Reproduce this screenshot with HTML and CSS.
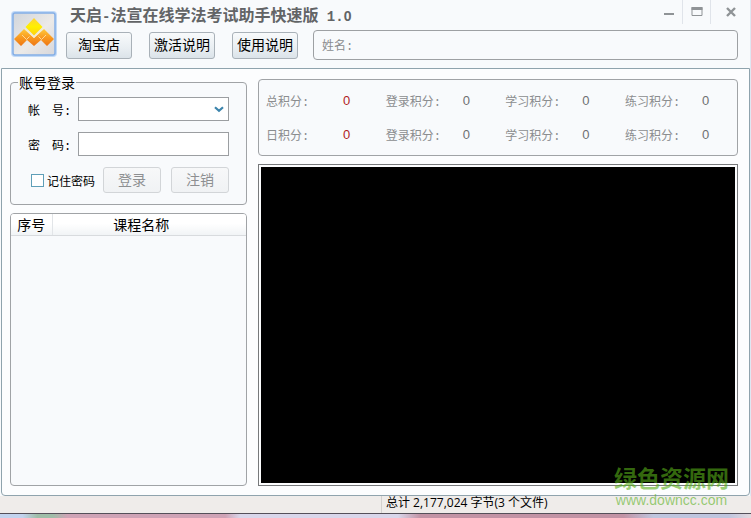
FILE: index.html
```html
<!DOCTYPE html>
<html lang="zh-CN">
<head>
<meta charset="utf-8">
<title>天启-法宣在线学法考试助手快速版 1.0</title>
<link rel="stylesheet" href="styles.css">
</head>
<body>
<div class="window">
  <header class="header">
    <div class="logo">
      <svg viewBox="0 0 46 46" width="46" height="46" aria-hidden="true">
        <defs>
          <linearGradient id="tile" x1="0" y1="0" x2="1" y2="1"><stop offset="0" stop-color="#cfd4db"/><stop offset=".55" stop-color="#eceae8"/><stop offset="1" stop-color="#d6d6da"/></linearGradient>
          <linearGradient id="gold" x1="0" y1="0" x2="0" y2="1"><stop offset="0" stop-color="#ffd23a"/><stop offset=".5" stop-color="#fff000"/><stop offset="1" stop-color="#ffd010"/></linearGradient>
          <linearGradient id="amber" x1="0" y1="0" x2="0" y2="1"><stop offset="0" stop-color="#ffc93a"/><stop offset=".5" stop-color="#f99a20"/><stop offset="1" stop-color="#ee7614"/></linearGradient>
        </defs>
        <rect x="1" y="1" width="44" height="44" rx="3" fill="url(#tile)" stroke="#c2daf7" stroke-width="2"/>
        <rect x="2" y="2" width="42" height="42" rx="2" fill="none" stroke="#84aee6" stroke-width="1.5"/>
        <path d="M3 28L13 18l10 9 10-9 10 10-7 7-6-6-7 6-7-6-6 6z" fill="url(#amber)"/>
        <path d="M11 24l4.500 4.500 3-3M35 24l-4.500 4.500-3-3" fill="none" stroke="#ffe6b0" stroke-width=".8"/>
        <path d="M14 17.500l9 8.500 9-8.500" fill="none" stroke="#f6eccb" stroke-width="1.300"/>
        <path d="M23 7l8.500 9-8.500 8.500-8.500-8.500z" fill="url(#gold)"/>
      </svg>
    </div>
    <div class="header-body">
      <div class="titlebar">
        <h1 class="title">天启<span class="mono">-</span>法宣在线学法考试助手快速版<span class="mono"> 1.</span><span class="digit">0</span></h1>
        <div class="controls">
          <button class="control" type="button" aria-label="最小化"><svg width="12" height="12" viewBox="0 0 12 12"><path d="M1 8h10" stroke="#8f9396" stroke-width="2"/></svg></button>
          <button class="control" type="button" aria-label="最大化"><svg width="12" height="12" viewBox="0 0 12 12"><path d="M1 1.500h10v8H1z" fill="none" stroke="#8f9396"/><path d="M.5 2.500h11" stroke="#8f9396" stroke-width="3"/></svg></button>
          <button class="control control-close" type="button" aria-label="关闭"><svg width="12" height="12" viewBox="0 0 12 12"><path d="M2 2l8 8M10 2l-8 8" stroke="#8f9396" stroke-width="2.400"/></svg></button>
        </div>
      </div>
      <div class="toolbar">
        <button class="button" type="button">淘宝店</button>
        <button class="button" type="button">激活说明</button>
        <button class="button" type="button">使用说明</button>
        <div class="name-box">姓名:</div>
      </div>
    </div>
  </header>
  <main class="main">
    <div class="side">
      <form>
        <fieldset class="login">
          <legend>账号登录</legend>
          <div class="field">
            <label for="account">帐　号:</label>
            <div class="select-wrap">
              <select id="account" class="input"><option></option></select>
              <svg class="chevron" width="10" height="7" viewBox="0 0 10 7" aria-hidden="true"><path d="M1 1.200l4 3.600 4-3.600" fill="none" stroke="#3c84ac" stroke-width="2.200"/></svg>
            </div>
          </div>
          <div class="field">
            <label for="password">密　码:</label>
            <input id="password" class="input" type="password">
          </div>
          <div class="actions">
            <input id="remember" class="check" type="checkbox">
            <label for="remember">记住密码</label>
            <button class="button action" type="button" disabled>登录</button>
            <button class="button action" type="button" disabled>注销</button>
          </div>
        </fieldset>
      </form>
      <div class="courses">
        <table>
          <thead><tr><th class="index">序号</th><th>课程名称</th></tr></thead>
        </table>
      </div>
    </div>
    <div class="content">
      <div class="scores">
        <div class="score"><span>总积分:</span><b class="red">0</b></div>
        <div class="score"><span>登录积分:</span><b>0</b></div>
        <div class="score"><span>学习积分:</span><b>0</b></div>
        <div class="score"><span>练习积分:</span><b>0</b></div>
        <div class="score"><span>日积分:</span><b class="red">0</b></div>
        <div class="score"><span>登录积分:</span><b>0</b></div>
        <div class="score"><span>学习积分:</span><b>0</b></div>
        <div class="score"><span>练习积分:</span><b>0</b></div>
      </div>
      <div class="video"></div>
    </div>
  </main>
</div>
<footer class="status"><span class="status-pane"></span><span class="status-text">总计 2,177,024 字节(3 个文件)</span></footer>
<div class="desktop"></div>
<div class="watermark"><strong>绿色资源网</strong><span>www.downcc.com</span></div>
</body>
</html>
```
FILE: styles.css
```css
* { box-sizing: border-box; }
body {
  margin: 0;
  min-height: 100vh;
  display: flex;
  flex-direction: column;
  position: relative;
  background: #dfe7f2;
  color: #000;
  font: 12px/16px "Liberation Mono", "Noto Sans CJK SC", sans-serif;
}
button, input, select { font: inherit; margin: 0; }

.window {
  flex: 1;
  display: flex;
  flex-direction: column;
  margin-right: 1px;
  background: #f8fafc;
}
.header { display: flex; padding: 0 0 8px 11px; }
.logo { margin: 11px 9px 0 0; height: 46px; }
.header-body { flex: 1; }
.titlebar { display: flex; justify-content: space-between; height: 30px; }
.title {
  margin: 0;
  padding: 3px 0 0 4px;
  font-size: 16px;
  line-height: 22px;
  font-weight: 700;
  font-family: "Noto Sans CJK SC", sans-serif;
  color: #626466;
  white-space: pre;
}
.mono { font-family: "Liberation Mono", monospace; font-size: 14px; }
.digit { font-family: "Liberation Sans", sans-serif; font-size: 14px; }
.controls { display: flex; height: 24px; }
.control {
  width: 28px;
  padding: 0;
  border: 0;
  border-right: 1px solid #e0e4ea;
  background: none;
  display: flex;
  align-items: center;
  justify-content: center;
}
.control-close { width: 39px; border-right: 0; }
.toolbar { display: flex; align-items: center; gap: 17px; margin-right: 12px; }
.button {
  width: 66px;
  height: 27px;
  padding: 0 0 2px;
  border: 1px solid #a9b1b8;
  border-radius: 3px;
  background: linear-gradient(#f8fafb, #e9eef2 60%, #dbe3e9);
  color: #000;
  font: 14px/20px "Noto Sans CJK SC", sans-serif;
}
.button:disabled { color: #8d8f91; border-color: #d2d5d8; background: linear-gradient(#f7f8f9, #f0f2f4); }
.name-box {
  flex: 1;
  height: 30px;
  margin-left: -2px;
  padding: 2px 8px 0;
  border: 1px solid #9da0a3;
  border-radius: 4px;
  line-height: 28px;
  color: #8a8c8e;
}

.main {
  flex: 1;
  display: flex;
  gap: 11px;
  margin-left: 1px;
  padding: 3px 11px 9px 8px;
  border: 1px solid #8fa3ad;
  border-radius: 0 0 4px 4px;
  background: #fcfdfe;
}
.side { flex: 0 0 237px; display: flex; flex-direction: column; gap: 8px; }
.login {
  margin: 0;
  min-width: 0;
  padding: 5px 17px 11px;
  border: 1px solid #a0a3a6;
  border-radius: 4px;
  background: #f8fafc;
}
.login legend { margin-left: -10px; padding: 0 1px; font: 14px/20px "Noto Sans CJK SC", sans-serif; }
.field { display: flex; align-items: center; margin-bottom: 11px; }
.field label { flex: 0 0 50px; padding-top: 5px; }
.input {
  flex: 1;
  width: 100%;
  min-width: 0;
  height: 24px;
  padding: 0 4px;
  border: 1px solid #9b9ea1;
  border-radius: 0;
  background: #fff;
  appearance: none;
}
.select-wrap { flex: 1; display: flex; position: relative; }
.chevron { position: absolute; right: 5px; top: 9px; pointer-events: none; }
.actions { display: flex; align-items: center; margin-left: 3px; }
.actions label { margin: 0 auto 0 3px; padding-top: 5px; white-space: nowrap; }
.check {
  appearance: none;
  width: 13px;
  height: 13px;
  border: 1px solid #5f9fb8;
  background: #fff;
}
.action { width: 58px; height: 26px; }
.action + .action { margin-left: 10px; }
.courses {
  flex: 1;
  border: 1px solid #a0a3a6;
  border-radius: 4px;
  background: #f8fafc;
  overflow: hidden;
}
.courses table { width: 100%; border-collapse: collapse; background: linear-gradient(#fff 45%, #f1f4f6); }
.courses th {
  height: 21px;
  padding: 0;
  border-bottom: 1px solid #d8dbde;
  font: 14px/20px "Noto Sans CJK SC", sans-serif;
}
.courses th + th { padding-right: 16px; }
.courses .index { width: 41px; border-right: 1px solid #e2e5e8; }

.content { flex: 1; display: flex; flex-direction: column; gap: 8px; padding-top: 7px; }
.scores {
  display: grid;
  grid-template-columns: repeat(3, 1fr) 112px;
  grid-auto-rows: 34px;
  padding: 4px 0 3px 7px;
  border: 1px solid #a0a3a6;
  border-radius: 4px;
  background: #f8fafc;
  color: #8b8d8f;
}
.score { display: grid; grid-template-columns: 77px 1fr; align-items: center; }
.score span { padding-top: 3px; }
.score b { font: 13px/16px "Liberation Sans", sans-serif; color: #6e7072; }
.score .red { color: #b01c24; }
.video { flex: 1; border: 1px solid #77797b; padding: 2px; background: #000 content-box; }

.status {
  display: flex;
  height: 18px;
  border-bottom: 1px solid #55505a;
  background: #efecea;
  font: 12px/14px "Open Sans", "Noto Sans CJK SC", sans-serif;
}
.status-pane { flex: 0 0 382px; border-right: 1px solid #d3d1cf; }
.status-text { padding-left: 4px; white-space: nowrap; }
.desktop {
  height: 4px;
  background: linear-gradient(90deg, #c3d3ee 0 3%, #9fbda8 5% 7%, #cfa3b6 9% 30%, #d9d6ea 32% 53%, #c293a5 56% 83%, #bfc5de 87% 97%, #e3d8de);
}
.watermark {
  position: absolute;
  right: 22px;
  bottom: 10px;
  display: flex;
  flex-direction: column;
  align-items: center;
  gap: 3px;
  color: rgba(88, 176, 24, .6);
  pointer-events: none;
}
.watermark strong { font: 700 23px/24px "Noto Sans CJK SC", sans-serif; }
.watermark span { font: 14px/16px "Liberation Sans", sans-serif; }
```
